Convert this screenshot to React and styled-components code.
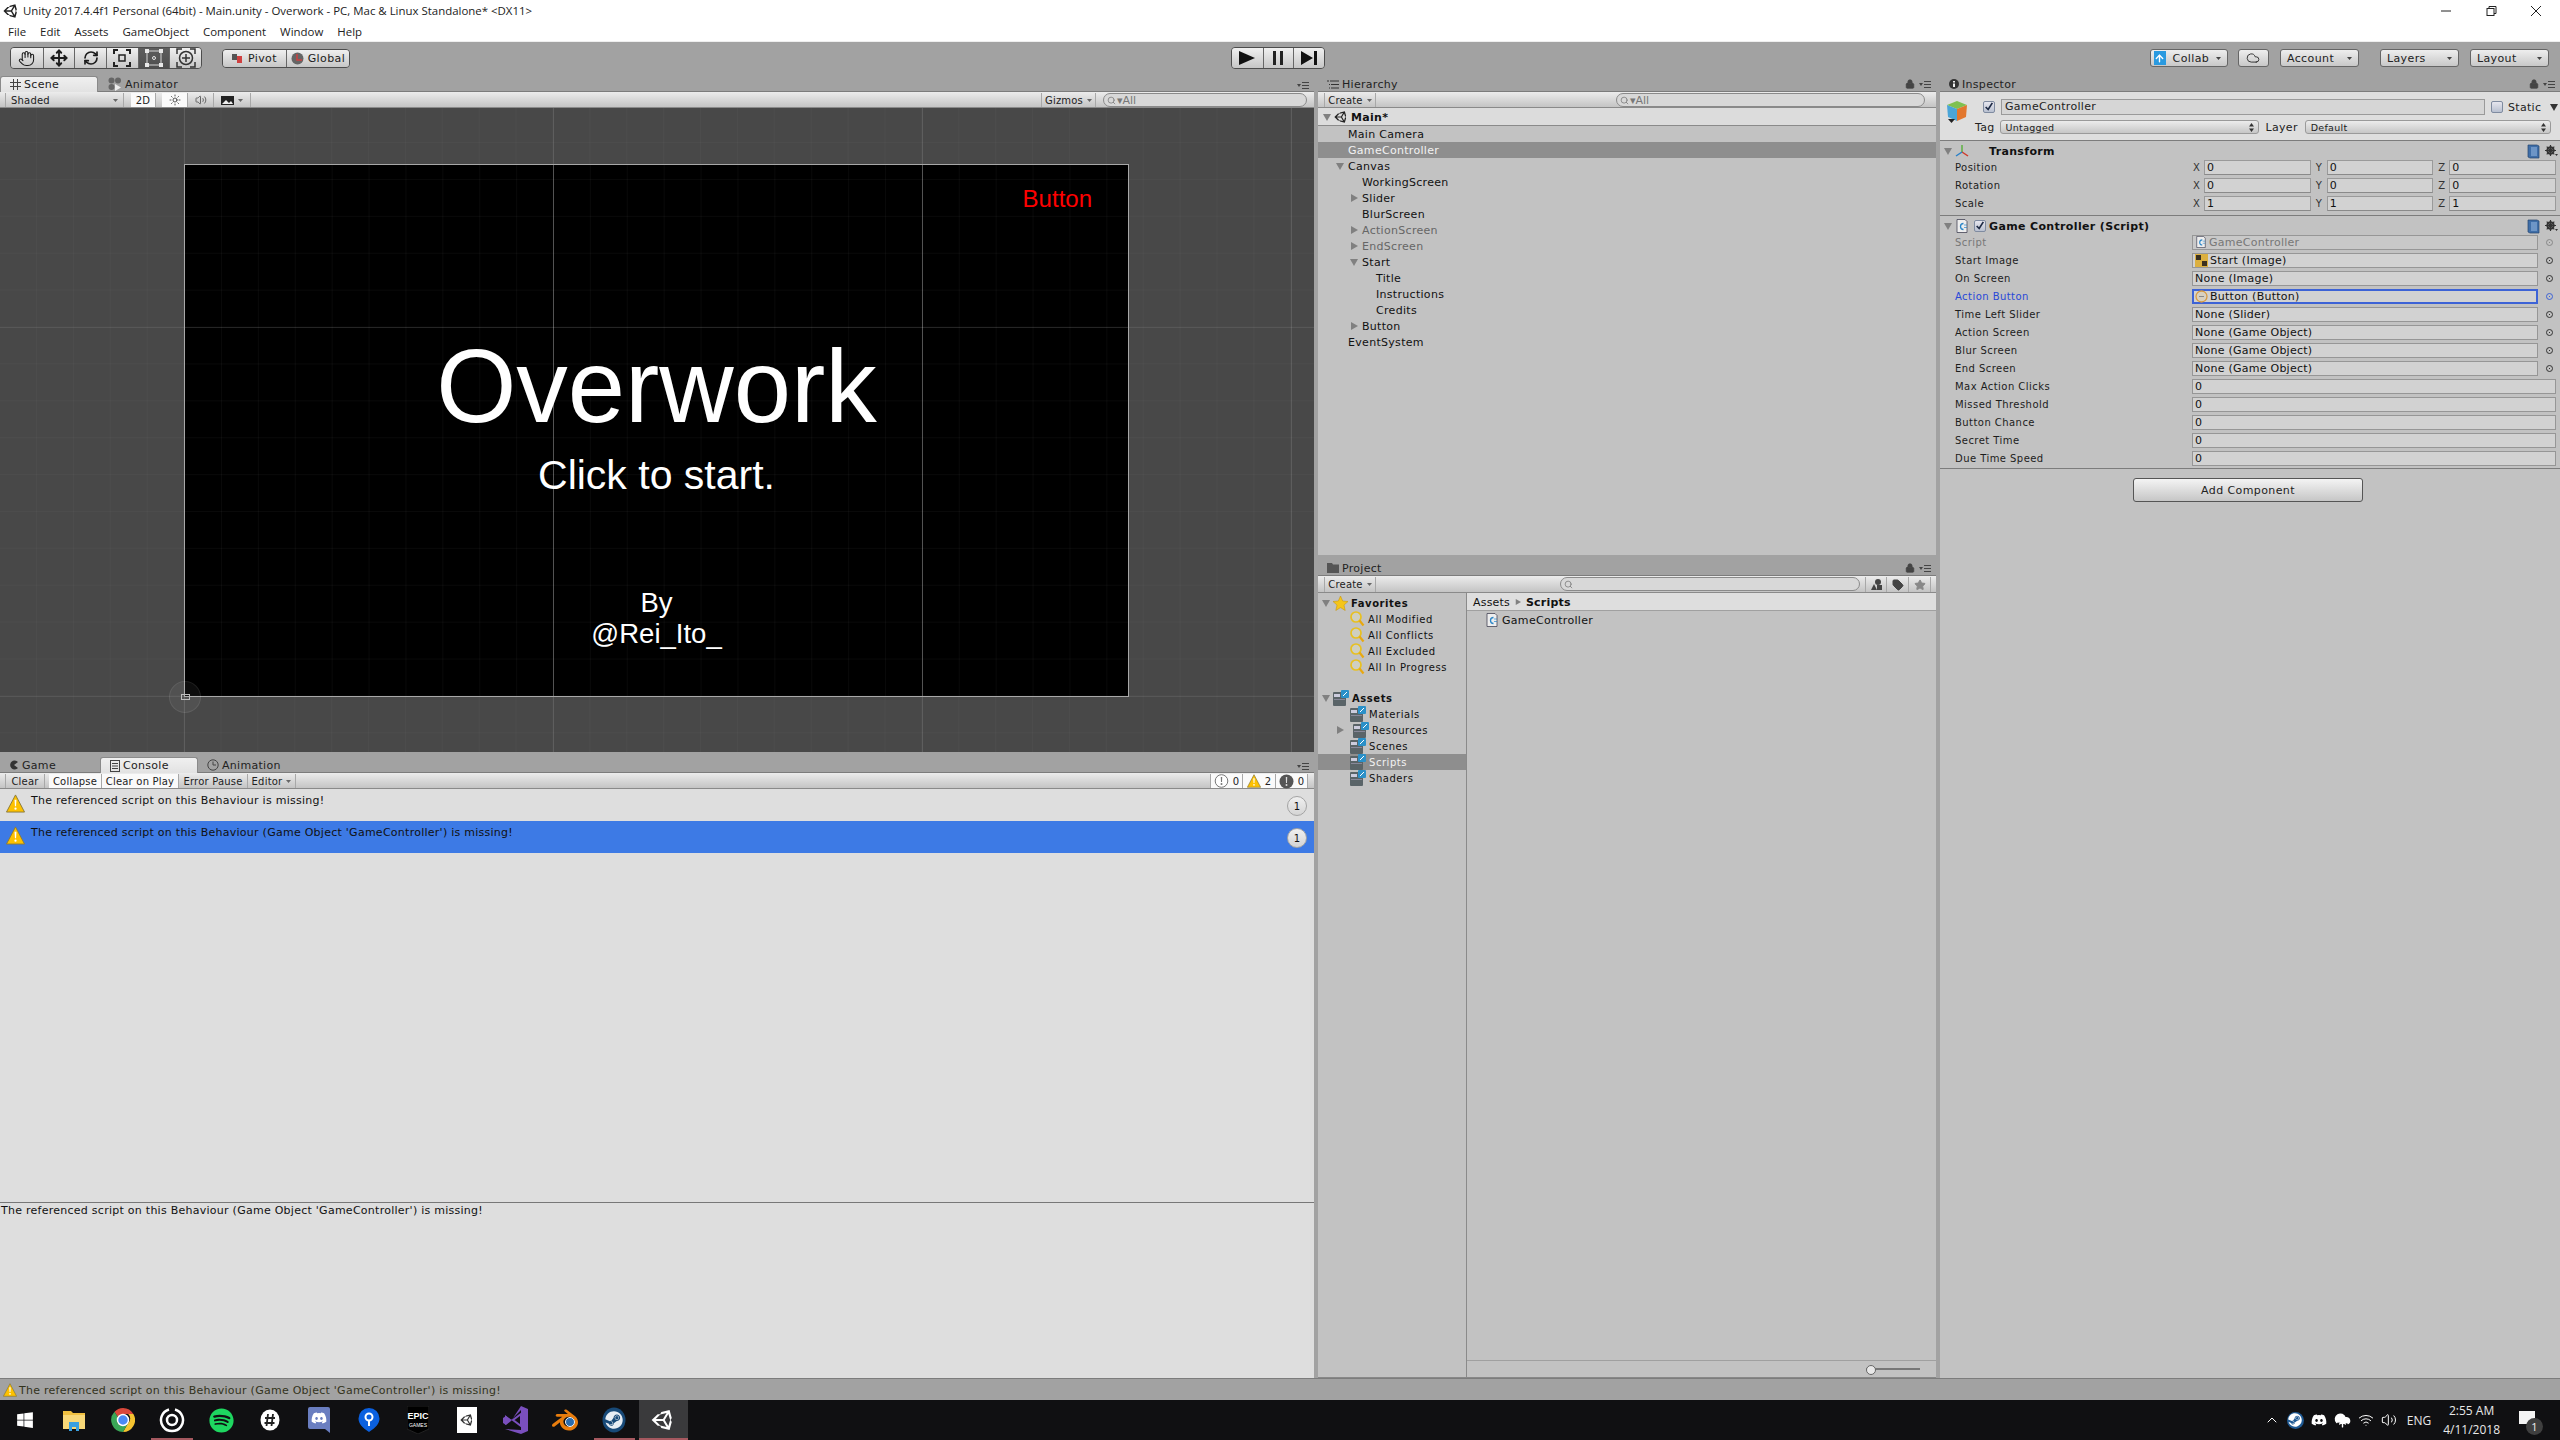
import React from 'react';
import styled, { createGlobalStyle } from 'styled-components';
import { FaDiscord, FaSpotify, FaSteam, FaUnity, FaWindows } from 'react-icons/fa';
import { SiBlender } from 'react-icons/si';
import { Hand, Move, RefreshCw, ChevronUp, Volume2, Wifi, Sun, Search, Lock, Tag, Star, Cloud, CloudUpload, ArrowUp } from 'lucide-react';

const GlobalStyle = createGlobalStyle`
  html, body { margin: 0; padding: 0; background: #a2a2a2; }
  * { box-sizing: border-box; }
  body { font-family: "DejaVu Sans", sans-serif; font-size: 10px; color: #111; }
`;

const Page = styled.div`
  width: 2560px;
  height: 1440px;
  display: flex;
  flex-direction: column;
  overflow: hidden;
`;

// window chrome
const TitleBar = styled.div`
  height: 21px;
  background: #fff;
  display: flex;
  align-items: center;
  padding-left: 3px;
  font-family: "Open Sans", sans-serif;
  font-size: 11.45px;
  color: #222;
  gap: 4px;
`;

const WindowControls = styled.div`
  margin-left: auto;
  display: flex;
  align-items: center;
  margin-right: 17px;
  gap: 31px;
`;

const MenuBar = styled.div`
  height: 20px;
  background: #fff;
  display: flex;
  align-items: center;
  padding-left: 8px;
  gap: 14px;
  font-family: "Open Sans", sans-serif;
  font-size: 11.45px;
  color: #222;
`;

const Toolbar = styled.div`
  height: 31px;
  background: #a2a2a2;
  border-top: 1px solid #eee;
  display: flex;
  align-items: center;
  padding: 5px 11px 3px 10px;
`;

const Segmented = styled.div`
  display: flex;
  height: ${(p) => p.$h || 21}px;
  margin-left: ${(p) => p.$ml || 0}px;
  border: 1px solid #4d4d4d;
  border-radius: 4px;
  overflow: hidden;
`;

const SegButton = styled.div`
  width: ${(p) => p.$w || 31.67}px;
  display: flex;
  align-items: center;
  justify-content: center;
  gap: 4px;
  font-size: 11px;
  letter-spacing: 0.4px;
  color: #1c1c1c;
  background: ${(p) => (p.$on ? 'linear-gradient(#5d5d5d, #4f4f4f)' : 'linear-gradient(#f0f0f0, #c6c6c6)')};
  & + & { border-left: 1px solid #666; }
`;

const DropButton = styled.div`
  width: ${(p) => p.$w}px;
  height: 18px;
  margin-left: ${(p) => p.$ml || 0}px;
  border: 1px solid #666;
  border-radius: 3px;
  background: linear-gradient(#eeeeee, #c8c8c8);
  display: flex;
  align-items: center;
  padding: 0 6px;
  font-size: 11px;
  letter-spacing: 0.4px;
  color: #222;
  justify-content: ${(p) => (p.$center ? 'center' : 'space-between')};
`;

const CollabBadge = styled.span`
  width: 12px;
  height: 14px;
  margin-left: -3px;
  background: #2a9ae0;
  display: inline-flex;
  align-items: center;
  justify-content: center;
`;

const Main = styled.div`
  height: 1306px;
  display: flex;
`;

const LeftColumn = styled.div`
  width: 1314px;
  display: flex;
  flex-direction: column;
`;

const MiddleColumn = styled.div`
  width: 622px;
  padding-left: 4px;
  display: flex;
  flex-direction: column;
`;

const RightColumn = styled.div`
  width: 624px;
  padding-left: 4px;
  display: flex;
  flex-direction: column;
`;

// dock tabs
const TabBar = styled.div`
  height: ${(p) => p.$h || 20}px;
  background: #a2a2a2;
  display: flex;
  align-items: flex-end;
  flex-shrink: 0;
  padding-left: ${(p) => p.$pl || 0}px;
  border-bottom: 1px solid #7c7c7c;
`;

const Tab = styled.div`
  width: ${(p) => p.$w || 98}px;
  height: 16px;
  margin-bottom: -1px;
  display: flex;
  align-items: center;
  gap: 3px;
  padding-left: ${(p) => p.$pl || 9}px;
  font-size: 11px;
  letter-spacing: 0.3px;
  color: #222;
  border-radius: 3px 3px 0 0;
  ${(p) => p.$active && `
    background: linear-gradient(#f0f0f0, #e2e2e2);
    border: 1px solid #8a8a8a;
    border-bottom: none;
  `}
`;

const DockMenu = styled.div`
  margin-left: auto;
  margin-right: 5px;
  margin-bottom: 2px;
  display: flex;
  align-items: center;
  gap: 4px;
`;

const PanelBar = styled.div`
  height: ${(p) => p.$h || 16}px;
  flex-shrink: 0;
  display: flex;
  align-items: stretch;
  padding-left: ${(p) => p.$pl || 0}px;
  padding-top: 1px;
  background: linear-gradient(#ececec, #c4c4c4);
  border-bottom: 1px solid #8a8a8a;
`;

const BarButton = styled.div`
  width: ${(p) => p.$w}px;
  margin-left: ${(p) => p.$ml || 0}px;
  display: flex;
  align-items: center;
  justify-content: ${(p) => p.$align || 'center'};
  gap: 4px;
  padding: 0 ${(p) => p.$pad || 0}px;
  font-size: 10px;
  letter-spacing: 0.2px;
  color: #222;
  border-right: 1px solid #a8a8a8;
  border-left: ${(p) => (p.$edge ? '1px solid #a8a8a8' : 'none')};
  background: ${(p) => (p.$on ? '#fafafa' : 'transparent')};
`;

const SearchBox = styled.div`
  width: ${(p) => p.$w}px;
  height: 14px;
  margin-left: ${(p) => p.$ml || 0}px;
  border: 1px solid #8a8a8a;
  border-radius: 7px;
  background: #d8d8d8;
  display: flex;
  align-items: center;
  padding-left: 3px;
  gap: 1px;
  color: #777;
  font-size: 11px;
`;

// scene
const Viewport = styled.div`
  height: 644px;
  flex-shrink: 0;
  padding: 56px 0 0 184px;
  position: relative;
  background-color: #484848;
  background-image:
    linear-gradient(to right, rgba(255, 255, 255, 0.11) 1px, transparent 1px),
    linear-gradient(to bottom, rgba(255, 255, 255, 0.07) 1px, transparent 1px),
    linear-gradient(to right, rgba(255, 255, 255, 0.025) 1px, transparent 1px),
    linear-gradient(to bottom, rgba(255, 255, 255, 0.025) 1px, transparent 1px);
  background-size: 369px 369px, 369px 369px, 36.9px 36.9px, 36.9px 36.9px;
  background-position: 184px 0, 0 219px, 36px 0, 0 34px;
`;

const GameCanvas = styled.div`
  width: 945px;
  height: 533px;
  position: relative;
  border: 1px solid #a8a8a8;
  display: flex;
  flex-direction: column;
  align-items: center;
  padding-top: 167px;
  color: #fff;
  font-family: "Liberation Sans", sans-serif;
  background-color: #000;
  background-image:
    linear-gradient(to right, rgba(255, 255, 255, 0.3) 1px, transparent 1px),
    linear-gradient(to bottom, rgba(255, 255, 255, 0.13) 1px, transparent 1px),
    linear-gradient(to right, rgba(255, 255, 255, 0.035) 1px, transparent 1px),
    linear-gradient(to bottom, rgba(255, 255, 255, 0.035) 1px, transparent 1px);
  background-size: 369px 369px, 369px 369px, 36.9px 36.9px, 36.9px 36.9px;
  background-position: 368px 0, 0 162px, 36px 0, 0 14px;
`;

const GameTitle = styled.div`
  font-size: 103px;
  line-height: 110px;
`;

const GameSub = styled.div`
  font-size: 41px;
  line-height: 48px;
  margin-top: 9px;
`;

const GameCredit = styled.div`
  font-size: 27.5px;
  line-height: 31px;
  text-align: center;
  margin-top: 88px;
`;

const GameButton = styled.div`
  position: absolute;
  top: 20px;
  right: 36px;
  font-size: 24px;
  line-height: 28px;
  color: #ff0000;
`;

const Pivot = styled.div`
  position: absolute;
  left: -16px;
  bottom: -17px;
  width: 32px;
  height: 32px;
  border-radius: 50%;
  background: rgba(255, 255, 255, 0.05);
  border: 1px solid rgba(255, 255, 255, 0.08);
  display: flex;
  align-items: center;
  justify-content: center;
  &::after {
    content: '';
    width: 7px;
    height: 4px;
    border: 1px solid #bbb;
  }
`;

// console
const ConsoleBody = styled.div`
  flex: 1;
  background: #dedede;
  display: flex;
  flex-direction: column;
`;

const LogRow = styled.div`
  height: 32px;
  flex-shrink: 0;
  display: flex;
  padding: 5px 7px 0 6px;
  gap: 6px;
  font-size: 11px;
  letter-spacing: 0.26px;
  color: #111;
  background: ${(p) => (p.$sel ? '#3d7ae5' : 'transparent')};
`;

const LogText = styled.div`
  line-height: 13px;
`;

const CountBadge = styled.div`
  margin-left: auto;
  width: 20px;
  height: 20px;
  margin-top: 2px;
  border-radius: 50%;
  background: linear-gradient(#f0f0f0, #d4d4d4);
  border: 1px solid #a4a4a4;
  display: flex;
  align-items: center;
  justify-content: center;
  font-size: 10px;
`;

const LogList = styled.div`
  height: 414px;
  flex-shrink: 0;
  border-bottom: 1px solid #777;
`;

const LogDetail = styled.div`
  padding: 1px 1px;
  font-size: 11px;
  letter-spacing: 0.26px;
  line-height: 13px;
`;

// hierarchy and project
const Panel = styled.div`
  height: ${(p) => p.$h}px;
  flex-shrink: 0;
  display: flex;
  flex-direction: column;
  background: #c2c2c2;
`;

const SceneHeader = styled.div`
  height: 18px;
  background: #dcdcdc;
  border-bottom: 1px solid #8a8a8a;
  display: flex;
  align-items: center;
  padding: 1px 0 0 5px;
  gap: 3px;
  font-weight: bold;
  font-size: 11px;
  letter-spacing: 0.3px;
`;

const TreeRow = styled.div`
  height: 16px;
  flex-shrink: 0;
  display: flex;
  align-items: center;
  padding-left: ${(p) => 18 + p.$level * 14}px;
  font-size: 11px;
  letter-spacing: 0.3px;
  color: ${(p) => (p.$sel ? '#f2f2f2' : p.$dim ? '#666' : '#111')};
  background: ${(p) => (p.$sel ? '#8e8e8e' : 'transparent')};
`;

const ArrowCell = styled.span`
  width: 12px;
  flex-shrink: 0;
  display: flex;
  align-items: center;
`;

const ProjectBody = styled.div`
  flex: 1;
  display: flex;
  border-bottom: 1px solid #888;
`;

const ProjectTree = styled.div`
  width: 149px;
  padding-top: 2px;
  border-right: 1px solid #8a8a8a;
`;

const FolderRow = styled.div`
  height: 16px;
  display: flex;
  align-items: center;
  gap: 3px;
  margin-bottom: ${(p) => p.$gap || 0}px;
  padding-left: ${(p) => 4 + p.$level * 14}px;
  font-size: 10px;
  letter-spacing: 0.55px;
  font-weight: ${(p) => (p.$bold ? 'bold' : 'normal')};
  color: ${(p) => (p.$sel ? '#f2f2f2' : '#111')};
  background: ${(p) => (p.$sel ? '#8e8e8e' : 'transparent')};
`;

const Spacer = styled.span`
  width: ${(p) => p.$w}px;
  flex-shrink: 0;
`;

const ProjectFiles = styled.div`
  flex: 1;
  display: flex;
  flex-direction: column;
`;

const Breadcrumb = styled.div`
  height: 18px;
  background: #dedede;
  border-bottom: 1px solid #a0a0a0;
  display: flex;
  align-items: center;
  padding: 1px 0 0 6px;
  gap: 5px;
  font-size: 11px;
  letter-spacing: 0.2px;
`;

const FileRow = styled.div`
  display: flex;
  align-items: center;
  gap: 3px;
  padding: 2px 0 0 18px;
  font-size: 11px;
  letter-spacing: 0.3px;
`;

const ProjectFooter = styled.div`
  margin-top: auto;
  height: 17px;
  display: flex;
  align-items: center;
  justify-content: flex-end;
  padding-right: 16px;
  border-top: 1px solid #a0a0a0;
`;

const SizeSlider = styled.div`
  width: 54px;
  height: 2px;
  background: #777;
  position: relative;
  &::before {
    content: '';
    position: absolute;
    left: 0;
    top: -3px;
    width: 8px;
    height: 8px;
    border-radius: 50%;
    background: #e8e8e8;
    border: 1px solid #666;
  }
`;

// inspector
const InspectorBody = styled.div`
  flex: 1;
  background: #c2c2c2;
  display: flex;
  flex-direction: column;
`;

const ObjectHeader = styled.div`
  height: 49px;
  background: #dedede;
  border-bottom: 1px solid #7c7c7c;
  display: grid;
  grid-template-columns: 61px 1fr;
  padding-top: 7px;
`;

const HeaderIcon = styled.div`
  padding: 1px 0 0 6px;
`;

const HeaderLines = styled.div`
  display: flex;
  flex-direction: column;
  gap: 5px;
`;

const HeaderLine = styled.div`
  display: flex;
  align-items: center;
  font-size: 11px;
  letter-spacing: 0.3px;
  color: #222;
`;

const TagLabel = styled.span`
  margin: 0 5px 0 -26px;
`;

const StaticCaret = styled.span`
  margin-left: 9px;
`;

const Check = styled.span`
  width: 12px;
  height: 12px;
  flex-shrink: 0;
  margin-left: ${(p) => p.$ml || 0}px;
  margin-right: ${(p) => p.$mr || 0}px;
  border: 1px solid #7f8ba0;
  border-radius: 2px;
  background: linear-gradient(#e6e6ee, #b8c0d0);
  display: inline-flex;
  align-items: center;
  justify-content: center;
`;

const NameField = styled.div`
  width: 484px;
  height: 16px;
  padding-left: 3px;
  background: #d6d6d6;
  border: 1px solid #9a9a9a;
  line-height: 14px;
  font-size: 11px;
`;

const Select = styled.div`
  width: ${(p) => p.$w}px;
  height: 14px;
  margin-left: ${(p) => p.$ml || 0}px;
  margin-right: ${(p) => p.$mr || 0}px;
  border: 1px solid #9a9a9a;
  border-radius: 3px;
  background: linear-gradient(#ececec, #c6c6c6);
  display: flex;
  align-items: center;
  justify-content: space-between;
  padding: 0 4px 0 5px;
  font-size: 9.5px;
  letter-spacing: 0.3px;
`;

const ComponentHeader = styled.div`
  height: 17px;
  display: flex;
  align-items: center;
  padding: 3px 2px 0 4px;
  gap: 3px;
  font-weight: bold;
  font-size: 11px;
  letter-spacing: 0.35px;
`;

const ComponentTitle = styled.span`
  margin-left: ${(p) => p.$ml || 0}px;
`;

const HeaderActions = styled.div`
  margin-left: auto;
  display: flex;
  align-items: center;
  gap: 5px;
`;

const Section = styled.div`
  padding-bottom: ${(p) => p.$pb || 0}px;
  border-bottom: 1px solid #7c7c7c;
`;

const PropRow = styled.div`
  height: 18px;
  display: flex;
  align-items: center;
  padding-left: 15px;
  padding-right: 4px;
  font-size: 10px;
  letter-spacing: 0.45px;
  color: ${(p) => p.$color || '#1c1c1c'};
`;

const PropLabel = styled.div`
  width: ${(p) => p.$w || 237}px;
  flex-shrink: 0;
`;

const Axis = styled.span`
  width: 11px;
  flex-shrink: 0;
  color: #333;
  font-size: 10px;
  margin-left: ${(p) => (p.$first ? 0 : 5)}px;
`;

const NumField = styled.div`
  width: 107px;
  height: 15px;
  padding-left: 2px;
  background: #d2d2d2;
  border: 1px solid #9a9a9a;
  border-bottom-color: #8a8a8a;
  line-height: 13px;
  font-size: 11px;
  color: #111;
`;

const ValueField = styled.div`
  flex: ${(p) => (p.$full ? 1 : 'none')};
  width: ${(p) => (p.$full ? 'auto' : '346px')};
  height: 15px;
  display: flex;
  align-items: center;
  gap: 2px;
  padding-left: 2px;
  font-size: 11px;
  background: ${(p) => (p.$faded ? '#c8c8c8' : '#d2d2d2')};
  border: 1px solid ${(p) => (p.$focus ? '#3d63d6' : '#969696')};
  box-shadow: ${(p) => (p.$focus ? 'inset 0 0 0 1px #3d63d6' : 'none')};
  color: ${(p) => (p.$faded ? '#777' : '#111')};
  letter-spacing: 0.25px;
`;

const Dot = styled.span`
  width: 7px;
  height: 7px;
  margin-left: 8px;
  border-radius: 50%;
  border: 1px solid ${(p) => p.$color || '#333'};
  display: inline-flex;
  align-items: center;
  justify-content: center;
  &::after {
    content: '';
    width: 1px;
    height: 1px;
    background: ${(p) => p.$color || '#333'};
  }
`;

const AddComponent = styled.div`
  width: 230px;
  height: 24px;
  margin: 9px 0 0 193px;
  border: 1px solid #555;
  border-radius: 3px;
  background: linear-gradient(#f4f4f4, #c6c6c6);
  display: flex;
  align-items: center;
  justify-content: center;
  font-size: 11px;
  letter-spacing: 0.4px;
  color: #222;
`;

// bottom
const StatusBar = styled.div`
  height: 22px;
  background: #a2a2a2;
  border-top: 1px solid #7c7c7c;
  display: flex;
  align-items: center;
  padding: 1px 0 0 3px;
  gap: 2px;
  font-size: 11px;
  letter-spacing: 0.26px;
  color: #33331c;
`;

const Taskbar = styled.div`
  height: 40px;
  background: #101012;
  display: flex;
  align-items: center;
  color: #fff;
`;

const TaskButton = styled.div`
  width: 49.15px;
  height: 40px;
  position: relative;
  display: flex;
  align-items: center;
  justify-content: center;
  background: ${(p) => (p.$active ? '#3a3a3c' : 'transparent')};
  ${(p) => p.$open && `
    &::after {
      content: '';
      position: absolute;
      bottom: 0;
      left: ${p.$active ? 0 : 4}px;
      right: ${p.$active ? 0 : 4}px;
      height: 2px;
      background: #a5585f;
    }
  `}
`;

const BlenderMark = styled.span`
  display: inline-flex;
  position: relative;
  &::after {
    content: '';
    position: absolute;
    left: 13px;
    top: 10px;
    width: 8px;
    height: 8px;
    border-radius: 50%;
    background: #2a6cae;
    border: 1px solid #f4f4f4;
  }
`;

const Tray = styled.div`
  margin-left: auto;
  display: flex;
  align-items: center;
  gap: 7px;
  padding-right: 25px;
`;

const TraySteam = styled.span`
  width: 17px;
  height: 17px;
  border-radius: 50%;
  background: #1f5a94;
  display: inline-flex;
  align-items: center;
  justify-content: center;
`;

const TrayText = styled.div`
  font-family: "Open Sans", sans-serif;
  font-size: 12px;
  color: #e8e8e8;
  margin: 0 ${(p) => p.$mr || 0}px 0 ${(p) => p.$ml || 0}px;
  text-align: center;
  line-height: 19px;
`;

const NoticeIcon = styled.div`
  position: relative;
  width: 16px;
  height: 13px;
  margin-left: 6px;
  margin-top: -5px;
  background: #f4f4f4;
`;

const NoticeBadge = styled.div`
  position: absolute;
  right: -8px;
  bottom: -11px;
  width: 17px;
  height: 17px;
  border-radius: 50%;
  background: #3f3f3f;
  font-family: "Open Sans", sans-serif;
  font-size: 11px;
  display: flex;
  align-items: center;
  justify-content: center;
  color: #eee;
`;

// small drawings
const Caret = ({ dir = 'down', color = '#808080', size = 8 }) => (
  <svg width={size} height={size} viewBox="0 0 8 8">
    <path d={dir === 'down' ? 'M0 1h8L4 8z' : 'M1 0l7 4-7 4z'} fill={color} />
  </svg>
);

const MiniDrop = ({ color = '#444' }) => (
  <svg width="5" height="3" viewBox="0 0 5 3"><path d="M0 0h5L2.5 3z" fill={color} /></svg>
);

const StackArrows = () => (
  <svg width="5" height="9" viewBox="0 0 5 9"><path d="M0 3.5h5L2.5 0zM0 5.5h5L2.5 9z" fill="#333" /></svg>
);

const DockIcon = ({ lock }) => (
  <DockMenu>
    {lock && <Lock size={10} color="#444" fill="#444" />}
    <svg width="12" height="7" viewBox="0 0 12 7">
      <path d="M0 2h4L2 5z" fill="#444" />
      <path d="M5 .5h7M5 3.5h7M5 6.5h7" stroke="#444" />
    </svg>
  </DockMenu>
);

const HierarchyGlyph = () => (
  <svg width="12" height="9" viewBox="0 0 12 9">
    <path d="M0 1h2M3 1h9M2 4.5h1M4 4.5h8M2 8h1M4 8h8" stroke="#333" />
  </svg>
);

const ScaleIcon = () => (
  <svg width="18" height="18" viewBox="0 0 18 18" fill="none" stroke="#222" strokeWidth="2">
    <rect x="6" y="6" width="6" height="6" strokeWidth="1.5" />
    <path d="M1 5V1h4M13 1h4v4M17 13v4h-4M5 17H1v-4" />
  </svg>
);

const RectIcon = () => (
  <svg width="20" height="20" viewBox="0 0 20 20" fill="none">
    <rect x="3" y="3" width="14" height="14" stroke="#d8d8d8" />
    <rect x="1" y="1" width="4" height="4" fill="#e8e8e8" />
    <rect x="15" y="1" width="4" height="4" fill="#e8e8e8" />
    <rect x="1" y="15" width="4" height="4" fill="#e8e8e8" />
    <rect x="15" y="15" width="4" height="4" fill="#e8e8e8" />
    <circle cx="10" cy="10" r="1.5" stroke="#e8e8e8" />
  </svg>
);

const TransformIcon = () => (
  <svg width="20" height="20" viewBox="0 0 20 20" fill="none" stroke="#333">
    <path d="M1 6V1h5M14 1h5v5M19 14v5h-5M6 19H1v-5" strokeWidth="1.5" />
    <circle cx="10" cy="10" r="6.5" strokeWidth="1.5" />
    <path d="M10 6v8M6 10h8" strokeWidth="1.5" />
  </svg>
);

const PivotGlyph = () => (
  <svg width="12" height="12" viewBox="0 0 12 12">
    <rect x="0" y="2" width="5" height="6" fill="#555" />
    <rect x="5" y="4" width="5" height="7" fill="#d04040" />
  </svg>
);

const GlobalGlyph = () => (
  <svg width="13" height="13" viewBox="0 0 13 13">
    <circle cx="6.5" cy="6.5" r="6" fill="#666" />
    <path d="M6 2v6h5" stroke="#d04040" strokeWidth="1.5" fill="none" />
  </svg>
);

const PlayGlyph = () => <svg width="16" height="14" viewBox="0 0 16 14"><path d="M0 0l16 7-16 7z" fill="#111" /></svg>;
const PauseGlyph = () => <svg width="10" height="14" viewBox="0 0 10 14"><path d="M0 0h3v14H0zM7 0h3v14H7z" fill="#222" /></svg>;
const StepGlyph = () => <svg width="16" height="14" viewBox="0 0 16 14"><path d="M0 0l12 7-12 7zM13 0h3v14h-3z" fill="#111" /></svg>;

const GridGlyph = () => (
  <svg width="11" height="11" viewBox="0 0 11 11"><path d="M3.5 0v11M7.5 0v11M0 3.5h11M0 7.5h11" stroke="#444" /></svg>
);

const AnimatorGlyph = () => (
  <svg width="14" height="14" viewBox="0 0 14 14">
    <circle cx="3.5" cy="3.5" r="3" fill="#666" /><circle cx="10" cy="3.5" r="3" fill="#666" />
    <circle cx="3.5" cy="10" r="3" fill="#666" /><path d="M7 7l6 3.5-6 3.5z" fill="#eee" />
  </svg>
);

const PacGlyph = () => (
  <svg width="10" height="10" viewBox="0 0 10 10"><path d="M9 2a4.5 4.5 0 1 0 0 6L5 5z" fill="#333" /></svg>
);

const ConsoleGlyph = () => (
  <svg width="10" height="12" viewBox="0 0 10 12" fill="none" stroke="#444"><rect x=".5" y=".5" width="9" height="11" /><path d="M2 3.5h6M2 6h6M2 8.5h6" /></svg>
);

const ClockGlyph = () => (
  <svg width="12" height="12" viewBox="0 0 12 12" fill="none" stroke="#444"><circle cx="6" cy="6" r="5.2" /><path d="M6 2.5V6h3" /></svg>
);

const Warn = ({ size = 19 }) => (
  <svg width={size} height={size} viewBox="0 0 20 20">
    <path d="M10 1L19.5 19H.5z" fill="#fdc100" stroke="#8a7a3a" />
    <path d="M9 6h2l-.4 7H9.4z" fill="#fff" />
    <circle cx="10" cy="15.5" r="1.2" fill="#fff" />
  </svg>
);

const InfoBubble = () => (
  <svg width="15" height="15" viewBox="0 0 15 15">
    <circle cx="7.5" cy="7" r="6.3" fill="#fff" stroke="#777" />
    <path d="M6.8 3h1.4l-.2 5H7z" fill="#777" /><circle cx="7.5" cy="10" r="1" fill="#777" />
  </svg>
);

const ErrorDot = () => (
  <svg width="15" height="15" viewBox="0 0 15 15">
    <circle cx="7.5" cy="7.5" r="7" fill="#555" />
    <path d="M6.8 3h1.4l-.2 6H7z" fill="#ddd" /><circle cx="7.5" cy="11" r="1" fill="#ddd" />
  </svg>
);

const CubeIcon = () => (
  <svg width="24" height="24" viewBox="0 0 24 24">
    <path d="M11 1l10 4-10 4L1 5z" fill="#7fc050" />
    <path d="M1 5l10 4v12L2 17z" fill="#4aa5d8" />
    <path d="M21 5L11 9v12l9-4z" fill="#e2772e" />
    <path d="M2 19h7l-3.5 4z" fill="#222" />
  </svg>
);

const AxisIcon = () => (
  <svg width="14" height="14" viewBox="0 0 14 14" fill="none" strokeWidth="1.5">
    <path d="M7 8V1" stroke="#5cb040" /><path d="M7 8l6 4" stroke="#d03a2a" /><path d="M7 8l-6 4" stroke="#2a80c8" />
  </svg>
);

const ScriptIcon = ({ size = 14 }) => (
  <svg width={size} height={size} viewBox="0 0 14 14">
    <path d="M2 .5h8l2 2v11H2z" fill="#eee" stroke="#445" strokeWidth=".8" />
    <path d="M8.5 4.5a3 3 0 1 0 0 6" fill="none" stroke="#2a86c8" strokeWidth="1.3" />
    <path d="M9 6h3M9 8.5h3" stroke="#2a86c8" strokeWidth=".7" />
  </svg>
);

const BookIcon = () => (
  <svg width="13" height="15" viewBox="0 0 13 15">
    <path d="M1 1h9l2 1v12H3l-2-1z" fill="#3f6ea8" stroke="#26466e" strokeWidth=".7" />
    <rect x="4" y="3" width="6" height="9" fill="#6d95c6" />
  </svg>
);

const GearIcon = () => (
  <svg width="13" height="12" viewBox="0 0 13 12">
    <circle cx="5.5" cy="5.5" r="3.2" fill="none" stroke="#333" strokeWidth="2" />
    <path d="M5.5 0v11M0 5.5h11M1.7 1.7l7.6 7.6M9.3 1.7l-7.6 7.6" stroke="#333" strokeWidth="1.2" />
    <path d="M10 9h3l-1.5 2z" fill="#333" />
  </svg>
);

const CheckMark = () => (
  <svg width="12" height="12" viewBox="0 0 12 12"><path d="M2 6l3 3 5-8" fill="none" stroke="#1e2a44" strokeWidth="2" /></svg>
);

const ImageThumb = () => (
  <svg width="13" height="13" viewBox="0 0 13 13">
    <rect width="13" height="13" fill="#dcb040" />
    <rect x="1" y="1" width="5" height="5" fill="#3a3020" />
    <rect x="7" y="7" width="5" height="5" fill="#3a3020" />
  </svg>
);

const OkThumb = () => (
  <svg width="13" height="13" viewBox="0 0 13 13">
    <circle cx="6.5" cy="6.5" r="5.5" fill="#d8d0c0" stroke="#d89a40" strokeWidth="1.3" />
    <path d="M4 6.5h5" stroke="#888" />
  </svg>
);

const FolderSearch = () => (
  <svg width="15" height="16" viewBox="0 0 15 16" fill="none">
    <circle cx="6" cy="6" r="5" stroke="#e8c020" strokeWidth="1.7" fill="#cfcfc0" />
    <path d="M9.5 9.5l4 5" stroke="#e8a810" strokeWidth="2.2" />
  </svg>
);

const UnityFolder = ({ size = 16 }) => (
  <svg width={size} height={size} viewBox="0 0 16 16">
    <rect x="0" y="2" width="13" height="14" rx="1" fill="#5a6468" />
    <rect x="1" y="4" width="6" height="3" fill="#ccd" />
    <rect x="8" y="0" width="8" height="8" rx="1" fill="#2a90c8" />
    <path d="M10 6l4-4" stroke="#fff" />
    <rect x="1" y="9" width="11" height="1" fill="#889" />
  </svg>
);

const StarIcon = () => (
  <svg width="15" height="15" viewBox="0 0 15 15"><path d="M7.5 0l2.2 5 5.3.5-4 3.6 1.2 5.4-4.700-2.900-4.700 2.900 1.200-5.400-4-3.600 5.300-.5z" fill="#f5c518" stroke="#c49000" strokeWidth=".5" /></svg>
);

const WinClose = () => <svg width="14" height="14" viewBox="0 0 14 14"><path d="M2 2l10 10M12 2L2 12" stroke="#222" /></svg>;
const WinMin = () => <svg width="14" height="14" viewBox="0 0 14 14"><path d="M2 7h10" stroke="#222" /></svg>;
const WinMax = () => <svg width="14" height="14" viewBox="0 0 14 14" fill="none" stroke="#222"><rect x="3" y="4.5" width="7" height="7" /><path d="M5 4.5V2.5h7v7h-2" /></svg>;

const FolderTask = () => (
  <svg width="24" height="22" viewBox="0 0 24 22">
    <path d="M1 2h8l2 2h12v16H1z" fill="#f0c040" />
    <rect x="1" y="6" width="22" height="14" fill="#f8d878" />
    <path d="M7 13h10v9h-3v-4h-4v4H7z" fill="#3aa0e0" />
  </svg>
);

const ChromeTask = () => (
  <svg width="24" height="24" viewBox="0 0 24 24">
    <path d="M12 0a12 12 0 0 1 10.4 6H12a6 6 0 0 0-5.2 3L3.5 3.8A12 12 0 0 1 12 0z" fill="#d9483b" />
    <path d="M22.4 6A12 12 0 0 1 12 24l5.2-9a6 6 0 0 0 0-9z" fill="#f5c330" />
    <path d="M12 24A12 12 0 0 1 3.5 3.8L6.8 9a6 6 0 0 0 5.2 9l5.2-3L12 24z" fill="#3aa757" />
    <circle cx="12" cy="12" r="5.5" fill="#4a8af4" stroke="#fff" strokeWidth="1.5" />
  </svg>
);

const RingTask = () => (
  <svg width="26" height="26" viewBox="0 0 26 26" fill="none" stroke="#fff">
    <path d="M16 2.5a11 11 0 1 1-6 0" strokeWidth="2.5" />
    <circle cx="13" cy="13" r="5" strokeWidth="2.5" />
  </svg>
);

const SlackTask = () => (
  <svg width="20" height="22" viewBox="0 0 20 22">
    <ellipse cx="10" cy="11" rx="9.5" ry="10.5" fill="#fff" />
    <path d="M8 5l-1.5 12M13 5l-1.5 12M5 9h10M4.5 14h10" stroke="#222" strokeWidth="1.8" />
  </svg>
);

const SourceTask = () => (
  <svg width="22" height="24" viewBox="0 0 22 24">
    <path d="M11 0a10.5 10.5 0 0 1 10.5 10.5c0 5-3.5 9-10.5 13.5C4 19.5.5 15.5.5 10.5A10.5 10.5 0 0 1 11 0z" fill="#0a60e0" />
    <circle cx="11" cy="9" r="3.5" fill="none" stroke="#fff" strokeWidth="2" />
    <path d="M11 12v6" stroke="#fff" strokeWidth="2" />
  </svg>
);

const EpicTask = () => (
  <svg width="22" height="28" viewBox="0 0 22 28">
    <path d="M0 0h22v23l-11 5-11-5z" fill="#000" stroke="#222" />
    <text x="11" y="13" fontSize="9" fill="#fff" textAnchor="middle" fontFamily="Liberation Sans, sans-serif" fontWeight="bold">EPIC</text>
    <text x="11" y="21" fontSize="5" fill="#fff" textAnchor="middle" fontFamily="Liberation Sans, sans-serif">GAMES</text>
  </svg>
);

const DiscordTask = () => (
  <svg width="22" height="26" viewBox="0 0 22 26">
    <path d="M2 0h18a2 2 0 0 1 2 2v24l-5-4H2a2 2 0 0 1-2-2V2a2 2 0 0 1 2-2z" fill="#6a7ec0" />
    <foreignObject x="3" y="3" width="16" height="16"><FaDiscord size={16} color="#fff" /></foreignObject>
  </svg>
);

const VsTask = () => (
  <svg width="26" height="28" viewBox="0 0 26 28">
    <path d="M18 0l7 3v22l-7 3L2 23l16 1V4L8 14l-5-4-3 2v5l3 2 5-4" fill="#7a4fbe" />
    <path d="M3 11l4 3-4 3zM18 8v12l-8-6z" fill="none" stroke="#7a4fbe" strokeWidth="2" />
  </svg>
);

const SteamTask = () => (
  <svg width="24" height="26" viewBox="0 0 24 26">
    <ellipse cx="12" cy="13" rx="11.5" ry="12.5" fill="#184a78" />
    <foreignObject x="3" y="4" width="18" height="18"><FaSteam size={18} color="#e8eef4" /></foreignObject>
  </svg>
);

const UnityTask = () => (
  <svg width="20" height="26" viewBox="0 0 20 26">
    <rect width="20" height="26" fill="#fff" />
    <foreignObject x="3" y="6" width="14" height="14"><FaUnity size={14} color="#333" /></foreignObject>
  </svg>
);

const hierarchyRows = [
  { label: 'Main Camera', level: 0 },
  { label: 'GameController', level: 0, sel: true },
  { label: 'Canvas', level: 0, arrow: 'down' },
  { label: 'WorkingScreen', level: 1 },
  { label: 'Slider', level: 1, arrow: 'right' },
  { label: 'BlurScreen', level: 1 },
  { label: 'ActionScreen', level: 1, arrow: 'right', dim: true },
  { label: 'EndScreen', level: 1, arrow: 'right', dim: true },
  { label: 'Start', level: 1, arrow: 'down' },
  { label: 'Title', level: 2 },
  { label: 'Instructions', level: 2 },
  { label: 'Credits', level: 2 },
  { label: 'Button', level: 1, arrow: 'right' },
  { label: 'EventSystem', level: 0 },
];

const objectProps = [
  { label: 'Script', value: 'GameController', faded: true, icon: <ScriptIcon size={12} />, color: '#777' },
  { label: 'Start Image', value: 'Start (Image)', icon: <ImageThumb /> },
  { label: 'On Screen', value: 'None (Image)' },
  { label: 'Action Button', value: 'Button (Button)', focus: true, icon: <OkThumb />, color: '#2848d8' },
  { label: 'Time Left Slider', value: 'None (Slider)' },
  { label: 'Action Screen', value: 'None (Game Object)' },
  { label: 'Blur Screen', value: 'None (Game Object)' },
  { label: 'End Screen', value: 'None (Game Object)' },
];

const numberProps = ['Max Action Clicks', 'Missed Threshold', 'Button Chance', 'Secret Time', 'Due Time Speed'];

const warningShort = 'The referenced script on this Behaviour is missing!';
const warningLong = "The referenced script on this Behaviour (Game Object 'GameController') is missing!";

const App = () => (
  <Page>
    <GlobalStyle />
    <TitleBar>
      <FaUnity size={16} color="#222" />
      <span>Unity 2017.4.4f1 Personal (64bit) - Main.unity - Overwork - PC, Mac &amp; Linux Standalone* &lt;DX11&gt;</span>
      <WindowControls><WinMin /><WinMax /><WinClose /></WindowControls>
    </TitleBar>
    <MenuBar>
      {['File', 'Edit', 'Assets', 'GameObject', 'Component', 'Window', 'Help'].map((m) => <span key={m}>{m}</span>)}
    </MenuBar>
    <Toolbar>
      <Segmented $h={22}>
        <SegButton><Hand size={17} strokeWidth={1.5} /></SegButton>
        <SegButton><Move size={18} strokeWidth={2.5} /></SegButton>
        <SegButton><RefreshCw size={16} strokeWidth={2.5} /></SegButton>
        <SegButton><ScaleIcon /></SegButton>
        <SegButton $on><RectIcon /></SegButton>
        <SegButton><TransformIcon /></SegButton>
      </Segmented>
      <Segmented $h={19} $ml={20}>
        <SegButton $w={63}><PivotGlyph />Pivot</SegButton>
        <SegButton $w={63}><GlobalGlyph />Global</SegButton>
      </Segmented>
      <Segmented $h={22} $ml={881}>
        <SegButton $w={30.67}><PlayGlyph /></SegButton>
        <SegButton $w={30.67}><PauseGlyph /></SegButton>
        <SegButton $w={30.67}><StepGlyph /></SegButton>
      </Segmented>
      <DropButton $w={78} $ml={825}>
        <CollabBadge><ArrowUp size={11} color="#fff" strokeWidth={3} /></CollabBadge>Collab<MiniDrop />
      </DropButton>
      <DropButton $w={31} $ml={10} $center><Cloud size={14} strokeWidth={1.5} /></DropButton>
      <DropButton $w={79} $ml={11}>Account<MiniDrop /></DropButton>
      <DropButton $w={79} $ml={21}>Layers<MiniDrop /></DropButton>
      <DropButton $w={79} $ml={11}>Layout<MiniDrop /></DropButton>
    </Toolbar>
    <Main>
      <LeftColumn>
        <TabBar>
          <Tab $active><GridGlyph />Scene</Tab>
          <Tab $pl={10} $w={90}><AnimatorGlyph />Animator</Tab>
          <DockIcon />
        </TabBar>
        <PanelBar $pl={5}>
          <BarButton $w={119} $edge $align="space-between" $pad={5}>Shaded<MiniDrop color="#666" /></BarButton>
          <BarButton $w={25} $ml={7} $on>2D</BarButton>
          <BarButton $w={26} $ml={6} $on><Sun size={12} strokeWidth={1.5} /></BarButton>
          <BarButton $w={26}><Volume2 size={12} color="#666" /></BarButton>
          <BarButton $w={37}>
            <svg width="13" height="9" viewBox="0 0 13 9"><rect width="13" height="9" fill="#222" /><path d="M1 8l4-4 3 3 2-2 2 3z" fill="#eee" /></svg>
            <MiniDrop color="#666" />
          </BarButton>
          <BarButton $w={55} $ml={790} $edge>Gizmos<MiniDrop color="#666" /></BarButton>
          <SearchBox $w={204} $ml={7}><Search size={9} />{'▾'}All</SearchBox>
        </PanelBar>
        <Viewport>
          <GameCanvas>
            <GameButton>Button</GameButton>
            <GameTitle>Overwork</GameTitle>
            <GameSub>Click to start.</GameSub>
            <GameCredit>By<br />@Rei_Ito_</GameCredit>
            <Pivot />
          </GameCanvas>
        </Viewport>
        <TabBar $h={21}>
          <Tab $pl={9} $w={100}><PacGlyph />Game</Tab>
          <Tab $active><ConsoleGlyph />Console</Tab>
          <Tab $w={90}><ClockGlyph />Animation</Tab>
          <DockIcon />
        </TabBar>
        <PanelBar $pl={5}>
          <BarButton $w={40} $edge>Clear</BarButton>
          <BarButton $w={53} $ml={4} $on>Collapse</BarButton>
          <BarButton $w={77} $on>Clear on Play</BarButton>
          <BarButton $w={69}>Error Pause</BarButton>
          <BarButton $w={48}>Editor<MiniDrop color="#666" /></BarButton>
          <BarButton $w={33} $ml={914} $edge $on><InfoBubble />0</BarButton>
          <BarButton $w={33} $on><Warn size={14} />2</BarButton>
          <BarButton $w={32} $on><ErrorDot />0</BarButton>
        </PanelBar>
        <ConsoleBody>
          <LogList>
            <LogRow><Warn /><LogText>{warningShort}</LogText><CountBadge>1</CountBadge></LogRow>
            <LogRow $sel><Warn /><LogText>{warningLong}</LogText><CountBadge>1</CountBadge></LogRow>
          </LogList>
          <LogDetail>{warningLong}</LogDetail>
        </ConsoleBody>
      </LeftColumn>

      <MiddleColumn>
        <Panel $h={483}>
          <TabBar>
            <Tab><HierarchyGlyph />Hierarchy</Tab>
            <DockIcon lock />
          </TabBar>
          <PanelBar $pl={6}>
            <BarButton $w={52} $edge>Create<MiniDrop color="#666" /></BarButton>
            <SearchBox $w={309} $ml={240}><Search size={9} />{'▾'}All</SearchBox>
          </PanelBar>
          <SceneHeader>
            <Caret />
            <FaUnity size={14} color="#222" />
            Main*
          </SceneHeader>
          {hierarchyRows.map((r) => (
            <TreeRow key={r.label} $level={r.level} $sel={r.sel} $dim={r.dim}>
              <ArrowCell>{r.arrow && <Caret dir={r.arrow} />}</ArrowCell>
              {r.label}
            </TreeRow>
          ))}
        </Panel>
        <Panel $h={823}>
          <TabBar $h={21}>
            <Tab>
              <svg width="12" height="10" viewBox="0 0 12 10"><path d="M0 0h5l1 1.5h6V10H0z" fill="#555" /></svg>
              Project
            </Tab>
            <DockIcon lock />
          </TabBar>
          <PanelBar $h={17} $pl={6}>
            <BarButton $w={52} $edge>Create<MiniDrop color="#666" /></BarButton>
            <SearchBox $w={300} $ml={184}><Search size={9} /></SearchBox>
            <BarButton $w={22} $ml={5} $edge>
              <svg width="11" height="11" viewBox="0 0 11 11"><circle cx="7" cy="3" r="3" fill="#444" /><path d="M0 11l3-6 3 6z" fill="#444" /><rect x="6" y="6" width="5" height="5" fill="#444" /></svg>
            </BarButton>
            <BarButton $w={22}><Tag size={12} fill="#444" color="#444" /></BarButton>
            <BarButton $w={22}><Star size={12} fill="#888" color="#888" /></BarButton>
          </PanelBar>
          <ProjectBody>
            <ProjectTree>
              <FolderRow $level={0} $bold><Caret />
                <StarIcon />Favorites</FolderRow>
              {['All Modified', 'All Conflicts', 'All Excluded'].map((f) => (
                <FolderRow key={f} $level={2}><FolderSearch />{f}</FolderRow>
              ))}
              <FolderRow $level={2} $gap={15}><FolderSearch />All In Progress</FolderRow>
              <FolderRow $level={0} $bold><Caret /><UnityFolder />Assets</FolderRow>
              <FolderRow $level={2}><UnityFolder />Materials</FolderRow>
              <FolderRow $level={1}><Caret dir="right" /><Spacer $w={3} /><UnityFolder />Resources</FolderRow>
              <FolderRow $level={2}><UnityFolder />Scenes</FolderRow>
              <FolderRow $level={2} $sel><UnityFolder />Scripts</FolderRow>
              <FolderRow $level={2}><UnityFolder />Shaders</FolderRow>
            </ProjectTree>
            <ProjectFiles>
              <Breadcrumb>Assets<Caret dir="right" size={6} /><b>Scripts</b></Breadcrumb>
              <FileRow><ScriptIcon />GameController</FileRow>
              <ProjectFooter><SizeSlider /></ProjectFooter>
            </ProjectFiles>
          </ProjectBody>
        </Panel>
      </MiddleColumn>

      <RightColumn>
        <TabBar>
          <Tab>
            <svg width="10" height="10" viewBox="0 0 10 10"><circle cx="5" cy="5" r="5" fill="#333" /><path d="M4 2h2v1.5H4zM4 4.5h2V8H4z" fill="#eee" /></svg>
            Inspector
          </Tab>
          <DockIcon lock />
        </TabBar>
        <InspectorBody>
          <ObjectHeader>
            <HeaderIcon><CubeIcon /></HeaderIcon>
            <HeaderLines>
              <HeaderLine>
                <Check $ml={-18} $mr={6}><CheckMark /></Check>
                <NameField>GameController</NameField>
                <Check $ml={6} $mr={5} />
                Static
                <StaticCaret><Caret color="#333" /></StaticCaret>
              </HeaderLine>
              <HeaderLine>
                <TagLabel>Tag</TagLabel>
                <Select $w={259} $mr={7}>Untagged<StackArrows /></Select>
                Layer
                <Select $w={246} $ml={7}>Default<StackArrows /></Select>
              </HeaderLine>
            </HeaderLines>
          </ObjectHeader>
          <Section $pb={3}>
            <ComponentHeader>
              <Caret />
              <AxisIcon />
              <ComponentTitle $ml={17}>Transform</ComponentTitle>
              <HeaderActions><BookIcon /><GearIcon /></HeaderActions>
            </ComponentHeader>
            {[['Position', '0'], ['Rotation', '0'], ['Scale', '1']].map(([name, v]) => (
              <PropRow key={name}>
                <PropLabel $w={238}>{name}</PropLabel>
                <Axis $first>X</Axis><NumField>{v}</NumField>
                <Axis>Y</Axis><NumField>{v}</NumField>
                <Axis>Z</Axis><NumField>{v}</NumField>
              </PropRow>
            ))}
          </Section>
          <Section $pb={1}>
            <ComponentHeader>
              <Caret />
              <ScriptIcon />
              <Check $ml={2}><CheckMark /></Check>
              Game Controller (Script)
              <HeaderActions><BookIcon /><GearIcon /></HeaderActions>
            </ComponentHeader>
            {objectProps.map((p) => (
              <PropRow key={p.label} $color={p.color}>
                <PropLabel>{p.label}</PropLabel>
                <ValueField $faded={p.faded} $focus={p.focus}>{p.icon}{p.value}</ValueField>
                <Dot $color={p.focus ? '#3d63d6' : p.faded ? '#888' : '#333'} />
              </PropRow>
            ))}
            {numberProps.map((label) => (
              <PropRow key={label}>
                <PropLabel>{label}</PropLabel>
                <ValueField $full>0</ValueField>
              </PropRow>
            ))}
          </Section>
          <AddComponent>Add Component</AddComponent>
        </InspectorBody>
      </RightColumn>
    </Main>
    <StatusBar><Warn size={14} />{warningLong}</StatusBar>
    <Taskbar>
      <TaskButton><FaWindows size={18} /></TaskButton>
      <TaskButton><FolderTask /></TaskButton>
      <TaskButton><ChromeTask /></TaskButton>
      <TaskButton $open><RingTask /></TaskButton>
      <TaskButton><FaSpotify size={25} color="#1ed760" /></TaskButton>
      <TaskButton><SlackTask /></TaskButton>
      <TaskButton><DiscordTask /></TaskButton>
      <TaskButton><SourceTask /></TaskButton>
      <TaskButton><EpicTask /></TaskButton>
      <TaskButton><UnityTask /></TaskButton>
      <TaskButton><VsTask /></TaskButton>
      <TaskButton><BlenderMark><SiBlender size={26} color="#e87d0d" /></BlenderMark></TaskButton>
      <TaskButton $open><SteamTask /></TaskButton>
      <TaskButton $open $active><FaUnity size={24} /></TaskButton>
      <Tray>
        <ChevronUp size={16} strokeWidth={1.5} />
        <TraySteam><FaSteam size={14} /></TraySteam>
        <FaDiscord size={16} />
        <CloudUpload size={17} fill="#fff" color="#fff" />
        <Wifi size={16} strokeWidth={1.5} />
        <Volume2 size={16} strokeWidth={1.5} />
        <TrayText $ml={3} $mr={5}>ENG</TrayText>
        <TrayText $mr={6}>2:55 AM<br />4/11/2018</TrayText>
        <NoticeIcon><NoticeBadge>1</NoticeBadge></NoticeIcon>
      </Tray>
    </Taskbar>
  </Page>
);

export default App;
